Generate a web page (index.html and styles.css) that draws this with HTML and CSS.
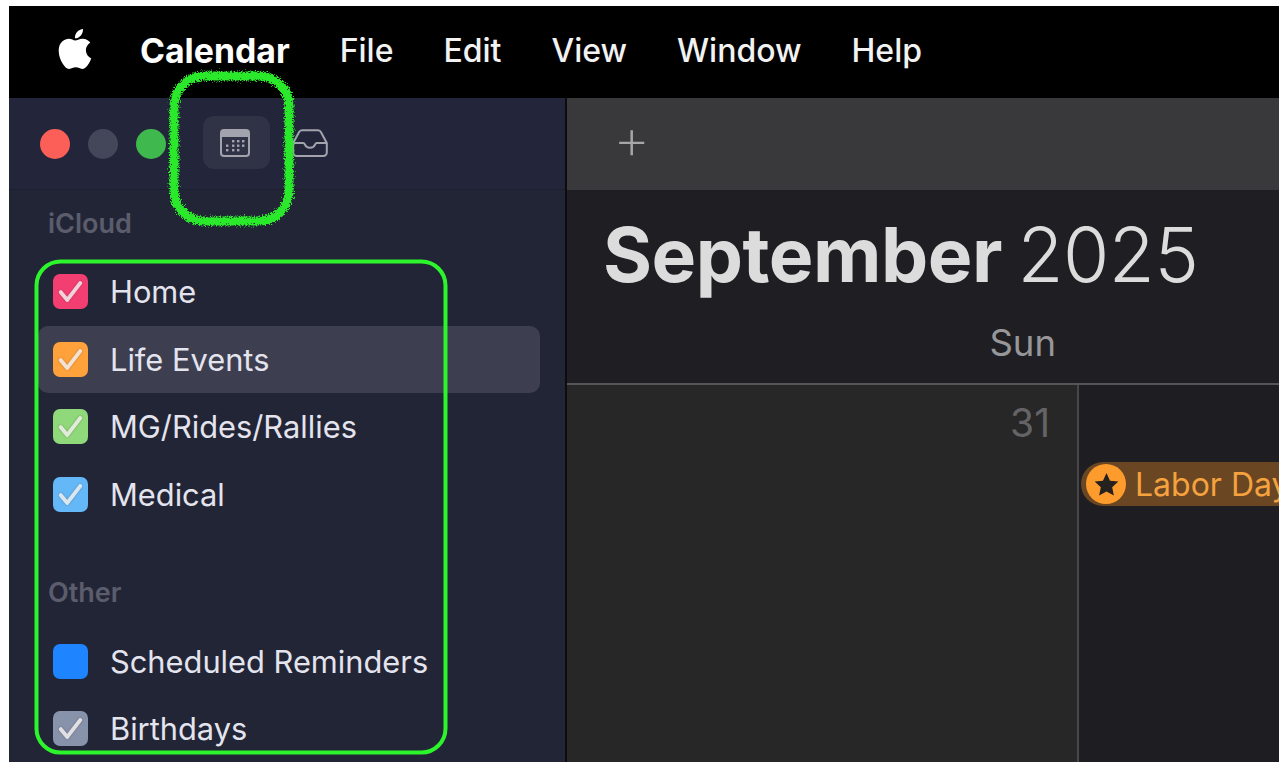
FILE: index.html
```html
<!DOCTYPE html>
<html lang="en">
<head>
<meta charset="utf-8">
<title>Calendar</title>
<link rel="stylesheet" href="styles.css">
</head>
<body>
<div class="app">
  <header class="menubar">
    <svg class="apple" viewBox="0 0 24 24" aria-hidden="true"><path d="M12.152 6.896c-.948 0-2.415-1.078-3.96-1.04-2.04.027-3.91 1.183-4.961 3.014-2.117 3.675-.546 9.103 1.519 12.09 1.013 1.454 2.208 3.09 3.792 3.039 1.52-.065 2.09-.987 3.935-.987 1.831 0 2.35.987 3.96.948 1.637-.026 2.676-1.48 3.676-2.948 1.156-1.688 1.636-3.325 1.662-3.415-.039-.013-3.182-1.221-3.22-4.857-.026-3.04 2.48-4.494 2.597-4.559-1.429-2.09-3.623-2.324-4.39-2.376-2-.156-3.675 1.09-4.61 1.09zM15.53 3.83c.843-1.012 1.4-2.427 1.245-3.83-1.207.052-2.662.805-3.532 1.818-.78.896-1.454 2.338-1.273 3.714 1.338.104 2.715-.688 3.559-1.701"/></svg>
    <span class="menu-app">Calendar</span>
    <span>File</span>
    <span>Edit</span>
    <span>View</span>
    <span>Window</span>
    <span>Help</span>
  </header>
  <div class="window">
    <aside class="sidebar">
      <div class="side-toolbar">
        <span class="light red"></span>
        <span class="light grey"></span>
        <span class="light green"></span>
        <span class="cal-btn">
          <svg class="cal-icon" viewBox="0 0 30 28" aria-hidden="true">
            <rect x="1" y="1" width="28" height="26" rx="3" fill="none" stroke="#a2a3ad" stroke-width="2"/>
            <path d="M1 4a3 3 0 0 1 3-3h22a3 3 0 0 1 3 3v4H1z" fill="#a2a3ad"/>
            <g fill="#a2a3ad">
              <rect x="12" y="11" width="2.4" height="2.4"/><rect x="17" y="11" width="2.4" height="2.4"/><rect x="22" y="11" width="2.4" height="2.4"/>
              <rect x="6" y="15.5" width="2.4" height="2.4"/><rect x="12" y="15.5" width="2.4" height="2.4"/><rect x="17" y="15.5" width="2.4" height="2.4"/><rect x="22" y="15.5" width="2.4" height="2.4"/>
              <rect x="6" y="20" width="2.4" height="2.4"/><rect x="12" y="20" width="2.4" height="2.4"/><rect x="17" y="20" width="2.4" height="2.4"/>
            </g>
          </svg>
        </span>
        <svg class="inbox-icon" viewBox="0 0 36 28" aria-hidden="true"><path d="M1.2 14 7 3.2A3.5 3.5 0 0 1 10 1.3h16a3.5 3.5 0 0 1 3 1.9L34.8 14v9.5a3.5 3.5 0 0 1-3.5 3.5H4.7a3.5 3.5 0 0 1-3.5-3.5zM1.2 14H11c1 0 1.6.6 2 1.6.8 2 2.6 3.2 5 3.2s4.200-1.200 5-3.200c.4-1 1-1.600 2-1.600h9.800" fill="none" stroke="#a2a3ad" stroke-width="2"/></svg>
      </div>
      <nav class="cal-list">
        <div class="group-label">iCloud</div>
        <ul class="rows">
          <li class="row"><span class="box pink"><svg viewBox="0 0 24 24"><path d="M4.500 12.500l5 6L19.500 5.500"/></svg></span>Home</li>
          <li class="row selected"><span class="box orange"><svg viewBox="0 0 24 24"><path d="M4.500 12.500l5 6L19.500 5.500"/></svg></span>Life Events</li>
          <li class="row"><span class="box lime"><svg viewBox="0 0 24 24"><path d="M4.500 12.500l5 6L19.500 5.500"/></svg></span>MG/Rides/Rallies</li>
          <li class="row"><span class="box sky"><svg viewBox="0 0 24 24"><path d="M4.500 12.500l5 6L19.500 5.500"/></svg></span>Medical</li>
        </ul>
        <div class="group-label other">Other</div>
        <ul class="rows">
          <li class="row"><span class="box blue"></span>Scheduled Reminders</li>
          <li class="row"><span class="box slate"><svg viewBox="0 0 24 24"><path d="M4.500 12.500l5 6L19.500 5.500"/></svg></span>Birthdays</li>
        </ul>
      </nav>
    </aside>
    <main class="main">
      <div class="main-toolbar"><span class="plus">+</span></div>
      <div class="month-head">
        <h1 class="month"><b>September</b> 2025</h1>
        <div class="dow"><span class="dow-cell">Sun</span></div>
      </div>
      <div class="grid">
        <div class="day weekend"><span class="date">31</span></div>
        <div class="day weekday">
          <div class="event">
            <span class="event-dot"><svg viewBox="0 0 24 24"><path d="M12 2.500l2.900 6.300 6.900.8-5.100 4.700 1.400 6.800-6.100-3.400-6.100 3.400 1.400-6.800-5.100-4.700 6.900-.8z"/></svg></span>
            <span class="event-name">Labor Day</span>
          </div>
        </div>
      </div>
    </main>
  </div>
  <svg class="marks" viewBox="0 0 1270 756" aria-hidden="true">
    <defs>
      <filter id="rough" x="-10%" y="-10%" width="120%" height="120%">
        <feTurbulence type="fractalNoise" baseFrequency="0.8" numOctaves="2" seed="4"/>
        <feDisplacementMap in="SourceGraphic" scale="8" xChannelSelector="R" yChannelSelector="G"/>
      </filter>
    </defs>
    <rect class="scribble" x="165" y="70" width="115" height="145" rx="30" filter="url(#rough)"/>
    <rect class="outline" x="27.500" y="255.500" width="409" height="491" rx="24"/>
  </svg>
</div>
</body>
</html>
```
FILE: styles.css
```css
* { box-sizing: border-box; }
html, body { margin: 0; padding: 0; background: #fff; }
body { padding: 6px 7px 8px 9px; height: 770px; overflow: hidden; font-family: Inter, "Noto Sans", "Liberation Sans", sans-serif; }
.app { position: relative; width: 1270px; height: 756px; overflow: hidden; display: flex; flex-direction: column; background: #000; }

.menubar { flex: 0 0 92px; display: flex; align-items: center; gap: 50px; padding: 0 0 4px 46px; background: #000; color: #f2f2f2; font-size: 32px; font-weight: 500; }
.apple { width: 40px; height: 40px; fill: #fff; margin-right: -5px; margin-top: -2px; }
.menu-app { font-weight: 700; color: #fff; font-size: 33.800px; }

.window { flex: 1; display: flex; min-height: 0; }
.sidebar { flex: 0 0 556px; display: flex; flex-direction: column; background: #222536; }
.side-toolbar { flex: 0 0 92px; display: flex; align-items: center; padding-left: 31px; padding-top: 1px; background: #23263a; border-bottom: 1px solid #1d1f2e; }
.light { width: 30px; height: 30px; border-radius: 50%; margin-right: 18px; }
.red { background: #fc5f57; }
.grey { background: #44465a; }
.green { background: #3fb84d; margin-right: 37px; }
.cal-btn { width: 67px; height: 53px; border-radius: 11px; background: #303246; display: flex; align-items: center; justify-content: center; padding-right: 3px; margin-right: 22px; margin-top: -3px; }
.cal-icon { width: 30px; height: 28px; }
.inbox-icon { width: 36px; height: 28px; margin-top: -2px; }

.cal-list { flex: 1; padding: 17px 25px 0 29px; color: #e6e6ee; font-size: 30.800px; }
.group-label { height: 34px; line-height: 34px; padding-left: 10px; font-size: 27px; font-weight: 600; color: #5b5d6c; }
.other { margin-top: 48px; }
.rows { list-style: none; margin: 17px 0 0; padding: 0; }
.row { height: 67.600px; display: flex; align-items: center; gap: 22px; padding-left: 15px; border-radius: 10px; color: #e4e4ee; white-space: nowrap; }
.selected { background: #3d3f50; }
.box { flex: 0 0 35px; width: 35px; height: 35px; border-radius: 7px; display: flex; align-items: center; justify-content: center; }
.box svg { width: 31px; height: 31px; fill: none; stroke: #fff; stroke-opacity: .78; stroke-width: 3; stroke-linecap: round; stroke-linejoin: round; filter: drop-shadow(0 0 1px rgba(70, 40, 30, .45)); }
.pink { background: #f33e72; }
.orange { background: #ffa23c; }
.lime { background: #8fd97b; }
.sky { background: #64b8f8; }
.blue { background: #1e84ff; }
.slate { background: #8792ab; }

.main { flex: 1; display: flex; flex-direction: column; min-width: 0; border-left: 2px solid #0c0c10; background: #1f1f23; }
.main-toolbar { flex: 0 0 92px; display: flex; align-items: center; padding-left: 46px; background: #39393b; }
.plus { font-size: 58px; font-weight: 200; line-height: 1; color: #a6a6a8; margin-top: -12px; }
.month-head { flex: 0 0 195px; display: flex; flex-direction: column; border-bottom: 2px solid #555557; background: #1f1f23; padding-top: 24px; }
.month { margin: 0; padding-left: 36px; font-size: 75px; line-height: 82px; font-weight: 300; color: #dcdcdc; letter-spacing: -.5px; word-spacing: -5px; white-space: nowrap; }
.month b { font-weight: 700; }
.dow { display: flex; padding-top: 25px; }
.dow-cell { width: 489px; text-align: right; font-size: 36.500px; line-height: 44px; color: #97979a; }
.grid { flex: 1; display: flex; min-height: 0; }
.day { min-width: 0; }
.weekend { flex: 0 0 512px; background: #272727; border-right: 2px solid #47474a; padding: 16px 27px 0 0; text-align: right; }
.date { font-size: 39px; line-height: 44px; color: #646466; }
.weekday { flex: 1; background: #1e1e22; padding: 77px 0 0 2px; overflow: hidden; }
.event { display: flex; align-items: center; gap: 9px; height: 44px; padding-left: 5px; border-radius: 22px 0 0 22px; background: #6a4722; color: #f5a23f; white-space: nowrap; }
.event-dot { flex: 0 0 40px; width: 40px; height: 40px; border-radius: 50%; background: #fd9b2c; display: flex; align-items: center; justify-content: center; }
.event-dot svg { width: 29px; height: 29px; fill: #24211f; }
.event-name { font-size: 32px; }

.marks { position: absolute; left: 0; top: 0; width: 1270px; height: 756px; pointer-events: none; }
.scribble { fill: none; stroke: #2be82b; stroke-width: 9; }
.outline { fill: none; stroke: #2cf52c; stroke-width: 4; }
```
